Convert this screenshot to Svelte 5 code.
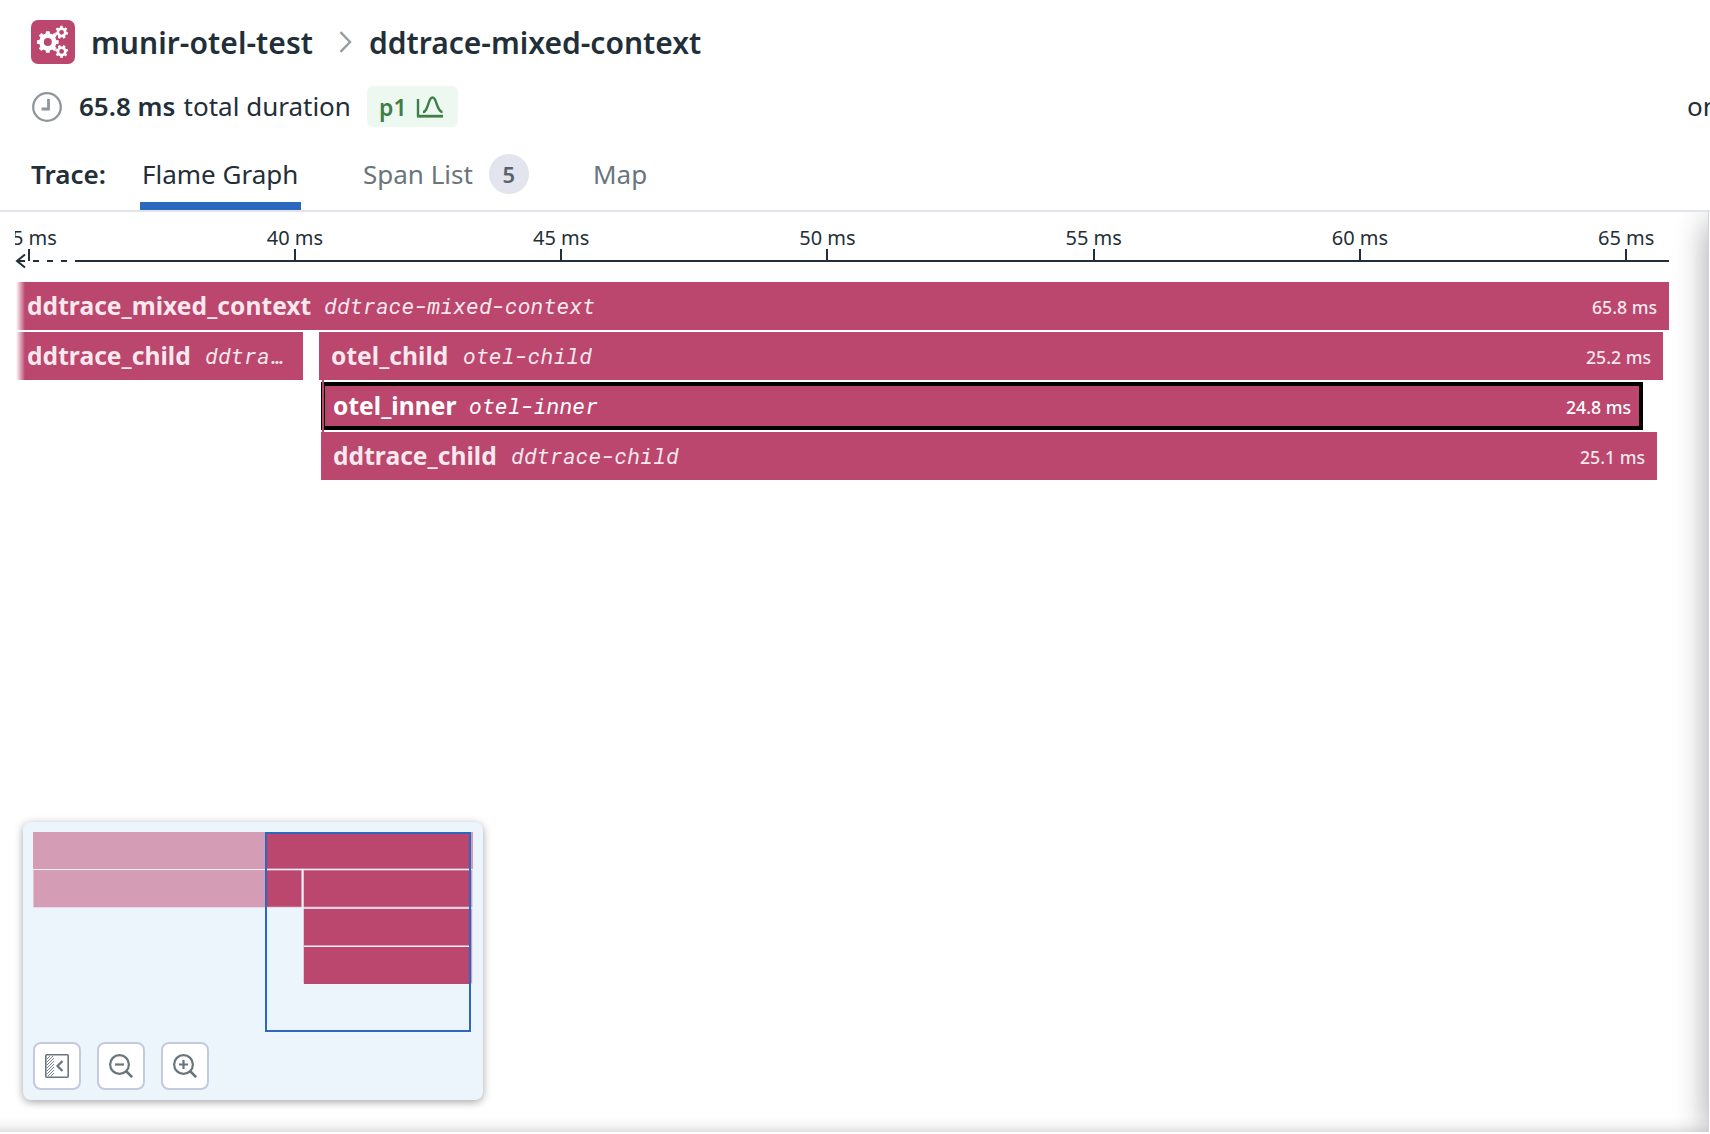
<script>
  const ticks = [35, 40, 45, 50, 55, 60, 65];

  // Each row holds the bars of one depth level; `gap` is the space before a bar.
  const rows = [
    [{ gap: 0, width: 1653, name: 'ddtrace_mixed_context', resource: 'ddtrace-mixed-context', time: '65.8 ms', cut: true, nameWidth: 285 }],
    [
      { gap: 0, width: 287, name: 'ddtrace_child', resource: 'ddtrace-child', cut: true, nameWidth: 166 },
      { gap: 16, width: 1344, name: 'otel_child', resource: 'otel-child', time: '25.2 ms', nameWidth: 120 }
    ],
    [{ gap: 305, width: 1322, name: 'otel_inner', resource: 'otel-inner', time: '24.8 ms', selected: true, nameWidth: 124 }],
    [{ gap: 305, width: 1336, name: 'ddtrace_child', resource: 'ddtrace-child', time: '25.1 ms', nameWidth: 166 }]
  ];

  // Outline of a gear with flat teeth, plus its round hole.
  function gear(cx, cy, outer, inner, hole, teeth, turn = 0) {
    const step = (Math.PI * 2) / teeth;
    const pts = [];
    for (let i = 0; i < teeth; i++) {
      const a = i * step + turn;
      for (const [offset, r] of [[-0.31, inner], [-0.21, outer], [0.21, outer], [0.31, inner]]) {
        const t = a + offset * step;
        pts.push(`${(cx + r * Math.cos(t)).toFixed(2)} ${(cy + r * Math.sin(t)).toFixed(2)}`);
      }
    }
    return `M${pts.join('L')}ZM${cx - hole} ${cy}a${hole} ${hole} 0 1 0 ${hole * 2} 0a${hole} ${hole} 0 1 0 ${-hole * 2} 0Z`;
  }
  const gears = gear(16.8, 22, 11, 8.7, 4, 8, 0) + gear(30.6, 12.3, 6.6, 5, 2.4, 7, 0.2) + gear(30.6, 31.4, 6.6, 5, 2.4, 7, -0.2);
</script>

<div class="page">
  <header>
    <div class="crumbs">
      <svg class="service" width="44" height="44" viewBox="0 0 44 44">
        <rect width="44" height="44" rx="7" fill="#bc476e" />
        <path d={gears} fill="#fff" fill-rule="evenodd" />
      </svg>
      <span class="crumb first">munir-otel-test</span>
      <svg class="chev" width="14" height="22" viewBox="0 0 14 22"><path d="M1.500 1.200L11 11L1.500 20.800" fill="none" stroke="#969da5" stroke-width="2.400" /></svg>
      <span class="crumb second">ddtrace-mixed-context</span>
    </div>
    <div class="summary">
      <svg width="30" height="30" viewBox="0 0 30 30" fill="none" stroke="#8e969d">
        <circle cx="15" cy="15" r="13.800" stroke-width="2.300" />
        <path d="M16.500 7V17H9.500" stroke-width="2.800" />
      </svg>
      <span class="duration"><b>65.8 ms</b> total duration</span>
      <span class="pill">
        <span class="pct">p1</span>
        <svg width="28" height="24" viewBox="0 0 28 24" fill="none" stroke="#3f7e46" stroke-width="2.400">
          <path d="M2 4V21.500" /><path d="M1 21.200H27" stroke-width="2.800" />
          <path d="M7 17C10 17 11 13 12.500 8.500C13.500 5 14.500 2.500 16.500 2.500C18.500 2.500 19.500 5 20.500 8.500C22 13 23.500 17 26.500 17" />
        </svg>
      </span>
      <span class="on">on</span>
    </div>
    <nav>
      <b class="label">Trace:</b>
      <span class="tab active">Flame Graph</span>
      <span class="tab span-list">Span List <i>5</i></span>
      <span class="tab map">Map</span>
    </nav>
  </header>

  <main>
    <div class="ruler">
      <div class="ticks">
        {#each ticks as t}<div class="tick"><span>{t} ms</span></div>{/each}
      </div>
      <svg class="axis" width="1654" height="16" viewBox="1 0 1654 16" stroke="#232f38" stroke-width="2" fill="none">
        <path d="M11 1.500L3 8L11 14.500" />
        <path d="M3 8H11M19 8H25M33 8H39M47 8H53M61 8H1655" />
      </svg>
    </div>
    <div class="flame">
      {#each rows as row}
        <div class="row">
          {#each row as bar}
            <div class="bar" class:cut={bar.cut} class:selected={bar.selected} class:untimed={!bar.time} style:margin-left="{bar.gap}px" style:width="{bar.width}px">
              <span class="name" style:width="{bar.nameWidth}px">{bar.name}</span>
              <em>{bar.resource}</em>
              {#if bar.time}<span class="time">{bar.time}</span>{/if}
              {#if bar.selected}<span class="link"></span>{/if}
            </div>
          {/each}
        </div>
      {/each}
    </div>

    <div class="minimap">
      <svg width="440" height="200" viewBox="0 0 440 200">
        <g fill="#d59db5">
          <rect width="440" height="37" />
          <rect x="0.400" y="38" width="268.200" height="37.300" />
          <rect x="270.400" y="38" width="169" height="37.300" />
          <rect x="270.500" y="76.500" width="168.700" height="75" />
        </g>
        <g fill="#bc476e">
          <rect x="233" width="205" height="36.300" />
          <rect x="233" y="38.600" width="35.300" height="36" />
          <rect x="271" y="38.600" width="167" height="36" />
          <rect x="271" y="77" width="167" height="36" />
          <rect x="271" y="115" width="167" height="37" />
        </g>
        <path d="M0 37.500H438M269.500 37V75M271 114.500H438" stroke="#fbf1f6" stroke-width="1" />
        <path d="M271 76H438" stroke="#dfd0dc" stroke-width="2" />
        <rect x="233" y="1" width="204" height="198" fill="none" stroke="#2c69be" stroke-width="2" />
      </svg>
      <div class="buttons">
        <button aria-label="Collapse minimap">
          <svg width="24" height="24" viewBox="0 0 24 24" fill="none" stroke="#69757d">
            <rect x="0.800" y="0.800" width="22.400" height="22.400" rx="1" stroke-width="1.600" />
            <path d="M2 5L5 2M2 8L8 2M2 11L9 4M2 14L9 7M2 17L9 10M2 20L9 13M3 22L9 16M6 22L9 19" stroke-width="0.900" />
            <path d="M17.500 7L12.500 12L17.500 17" stroke-width="2.200" />
          </svg>
        </button>
        <button aria-label="Zoom out">
          <svg width="24" height="24" viewBox="0 0 24 24" fill="none" stroke="#69757d" stroke-width="2.200">
            <circle cx="10.500" cy="10.500" r="9.400" /><path d="M17 17L23.200 23.200" stroke-width="2.600" /><path d="M6 10.500H15" />
          </svg>
        </button>
        <button aria-label="Zoom in">
          <svg width="24" height="24" viewBox="0 0 24 24" fill="none" stroke="#69757d" stroke-width="2.200">
            <circle cx="10.500" cy="10.500" r="9.400" /><path d="M17 17L23.200 23.200" stroke-width="2.600" /><path d="M6 10.500H15M10.500 6V15" />
          </svg>
        </button>
      </div>
    </div>
  </main>
</div>

<style>
  :global(body) { margin: 0; background: #fff; overflow: hidden; }
  .page { width: 1710px; height: 1134px; overflow: hidden; box-sizing: border-box; padding-bottom: 2px; display: flex; flex-direction: column; font-family: "Noto Sans", sans-serif; color: #232f38; white-space: nowrap; }
  svg { display: block; flex: none; }
  header { height: 210px; flex: none; border-bottom: 2px solid #e1e4ea; display: flex; flex-direction: column; }
  .crumbs { display: flex; align-items: center; height: 44px; padding: 20px 0 0 31px; }
  .crumb { font-size: 30px; line-height: 44px; padding-top: 2px; font-weight: 600; }
  .first { margin-left: 16px; width: 248px; letter-spacing: .05px; }
  .second { margin-left: 16px; }
  .summary { display: flex; align-items: center; height: 41px; margin-top: 22px; padding-left: 32px; font-size: 26px; }
  .duration { margin: -2px 0 0 17px; width: 288px; flex: none; }
  b { font-weight: 600; }
  .duration b { margin-right: 1.500px; }
  .pill { display: flex; flex: none; align-items: center; box-sizing: border-box; width: 91px; height: 41px; border-radius: 6px; background: #edf8f0; color: #3f7e46; padding: 0 12px; gap: 12px; }
  .pct { font-size: 23px; font-weight: 600; width: 25px; }
  .on { margin: -2px 0 0 1229px; flex: none; }
  nav { display: flex; flex: 1; box-sizing: border-box; padding: 11px 0 0 31px; font-size: 26px; line-height: 72px; }
  .label { width: 109px; }
  .tab { color: #69757d; height: 72px; }
  .active { color: #232f38; box-sizing: border-box; width: 161px; padding-left: 2px; border-bottom: 8px solid #2c69be; }
  .span-list { margin-left: 62px; display: flex; align-items: center; width: 168px; gap: 16px; }
  .span-list i { font-style: normal; font-size: 22px; font-weight: 600; width: 40px; height: 40px; line-height: 40px; border-radius: 50%; background: #e2e5ed; color: #56626c; text-align: center; }
  .map { margin-left: 62px; }
  main { flex: 1; box-sizing: border-box; width: 1709px; display: flex; flex-direction: column; border-right: 1px solid #d0d3da; position: relative; overflow: hidden; }
  main::after { content: ""; position: absolute; left: 100%; top: 10px; bottom: 0; width: 30px; box-shadow: 0 0 32px rgba(0,0,0,.38); }
  main::before { content: ""; position: absolute; top: 100%; left: -30px; right: -30px; height: 30px; box-shadow: 0 0 16px rgba(0,0,0,.24); }
  .ruler { margin-left: 15px; overflow: hidden; height: 57px; flex: none; }
  .ticks { display: grid; grid-template-columns: repeat(7, 266.250px); margin-left: -119.500px; height: 49px; width: 1864px; }
  .tick { display: flex; flex-direction: column; align-items: center; font-size: 20px; line-height: 26px; padding-top: 12.500px; }
  .tick::after { content: ""; width: 2px; height: 12px; margin-top: -1.500px; background: #232f38; }
  .axis { margin-top: -8px; }
  .flame { margin: 13px 0 0 16px; display: flex; flex-direction: column; gap: 2px; }
  .row { display: flex; height: 48px; }
  .bar { box-sizing: border-box; flex: none; display: flex; align-items: center; height: 48px; padding: 0 12px; background: #bc476e; color: rgba(255,255,255,.88); position: relative; }
  .cut { padding-left: 11px; background: linear-gradient(90deg, rgba(188,71,110,0), #bc476e 9px); }
  .untimed { padding-right: 17px; }
  .name { font-weight: 700; font-size: 24.600px; letter-spacing: .03px; line-height: 46px; flex: none; margin-right: 12px; padding-bottom: 1px; }
  em { font-family: "Roboto Mono", "Liberation Mono", monospace; font-size: 22px; overflow: hidden; text-overflow: ellipsis; padding-bottom: 2px; }
  .time { margin-left: auto; font-size: 17.700px; font-weight: 500; padding-top: 1px; }
  .selected { color: #fff; border: 4px solid #000; padding: 0 8px; }
  .link { position: absolute; left: -3px; top: -6px; width: 2px; height: 52px; background: #bc476e; }
  .minimap { margin: auto 0 32px 23px; box-sizing: border-box; width: 460px; height: 278px; padding: 10px; border-radius: 8px; background: #edf5fc; box-shadow: 0 2px 8px rgba(0,0,0,.36); }
  .buttons { display: flex; gap: 16px; margin-top: 10px; }
  button { width: 48px; height: 48px; box-sizing: border-box; border: 2px solid #c5c9de; border-radius: 8px; background: #fff; padding: 0; display: flex; align-items: center; justify-content: center; }
</style>
